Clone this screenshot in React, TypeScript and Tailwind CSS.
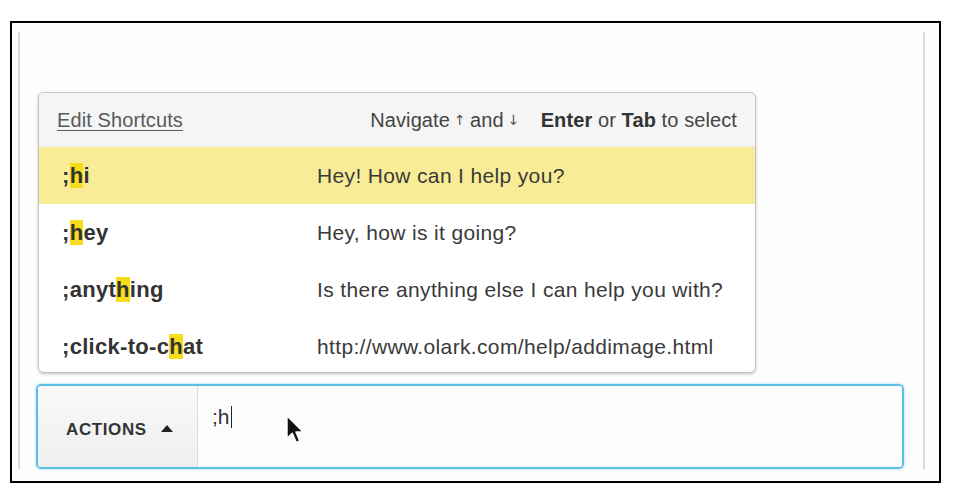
import React from "react";

type Shortcut = {
  before: string;
  hit: string;
  after: string;
  text: string;
};

const shortcuts: Shortcut[] = [
  { before: ";", hit: "h", after: "i", text: "Hey! How can I help you?" },
  { before: ";", hit: "h", after: "ey", text: "Hey, how is it going?" },
  { before: ";anyt", hit: "h", after: "ing", text: "Is there anything else I can help you with?" },
  { before: ";click-to-c", hit: "h", after: "at", text: "http://www.olark.com/help/addimage.html" },
];

const Pointer: React.FC = () => (
  <svg width="22" height="32" viewBox="0 0 20 30" className="absolute left-[87px] top-[28px]">
    <path
      d="M1.5 1.5 L1.5 23 L6.5 18.2 L10.2 26.8 L13.6 25.3 L10 16.9 L16.8 16.9 Z"
      fill="#111"
      stroke="#fff"
      strokeWidth="1.5"
      strokeLinejoin="round"
    />
  </svg>
);

const Arrow: React.FC<{ ch: string }> = ({ ch }) => (
  <span className="inline-block w-[12px] mx-[4px] text-center font-['DejaVu_Sans',sans-serif] text-[14px] leading-[20px] text-[#555]">
    {ch}
  </span>
);

const App: React.FC = () => {
  return (
    <div className="w-[958px] h-[504px] bg-white pt-[21px] pl-[10px] font-['Liberation_Sans',Arial,sans-serif]">
      <div className="w-[931px] h-[462px] border-2 border-black bg-[#fefefe]">
        {/* container with grey side rules */}
        <div className="ml-[6px] mt-[9px] w-[907px] h-[437px] border-x-2 border-[#dadada] pl-[16px] pt-[60px] flex flex-col">
          {/* shortcut popup */}
          <div className="ml-[2px] w-[718px] rounded-[6px] border border-[#c4c4c4] bg-white shadow-[0_1px_3px_rgba(0,0,0,0.25)] overflow-hidden">
            <div className="h-[54px] flex items-center justify-between px-[18px] bg-[#f5f5f5] border-b border-[#ececec] text-[20px] tracking-[0.1px]">
              <span className="text-[#5a5a5a] underline underline-offset-[3px] decoration-1">Edit Shortcuts</span>
              <div className="flex items-center gap-[17px] text-[#444]">
                <span className="flex items-center">
                  Navigate<Arrow ch="↑" />and<Arrow ch="↓" />
                </span>
                <span>
                  <b className="text-[#333]">Enter</b> or <b className="text-[#333]">Tab</b> to select
                </span>
              </div>
            </div>
            {shortcuts.map((s, i) => (
              <div
                key={s.text}
                className={
                  i === 0
                    ? "h-[57px] flex items-center bg-[#f9ec96] text-[#333]"
                    : "h-[57px] flex items-center bg-white text-[#333]"
                }
              >
                <div className="w-[278px] pl-[23px] text-[22px] font-bold tracking-[0.3px] leading-[26px]">
                  {s.before}
                  <span className="bg-[#f6dc1b]">{s.hit}</span>
                  {s.after}
                </div>
                <div className="text-[21px] tracking-[0.35px] text-[#3a3a3a]">{s.text}</div>
              </div>
            ))}
          </div>

          {/* chat input */}
          <div className="mt-[11px] w-[868px] h-[86px] flex rounded-[5px] border-2 border-[#5ac0e4] shadow-[0_0_3px_rgba(90,192,228,0.6)] overflow-hidden">
            <div className="w-[160px] flex items-center gap-[14px] pl-[28px] pt-[6px] border-r border-[#dedede] bg-gradient-to-b from-[#f9f9f9] to-[#efefef]">
              <span className="text-[17px] font-bold tracking-[0.6px] text-[#333]">ACTIONS</span>
              <span className="w-0 h-0 border-x-[6px] border-x-transparent border-b-[7px] border-b-[#222] mb-[2px]" />
            </div>
            <div className="relative flex-1 bg-[#fcfcfc] pl-[14px] pt-[18px]">
              <div className="flex items-center text-[21px] text-[#2d3340] leading-[26px]">
                <span>;h</span>
                <span className="ml-[1px] w-[1.5px] h-[22px] bg-[#222]" />
              </div>
              <Pointer />
            </div>
          </div>
        </div>
      </div>
    </div>
  );
};

export default App;
